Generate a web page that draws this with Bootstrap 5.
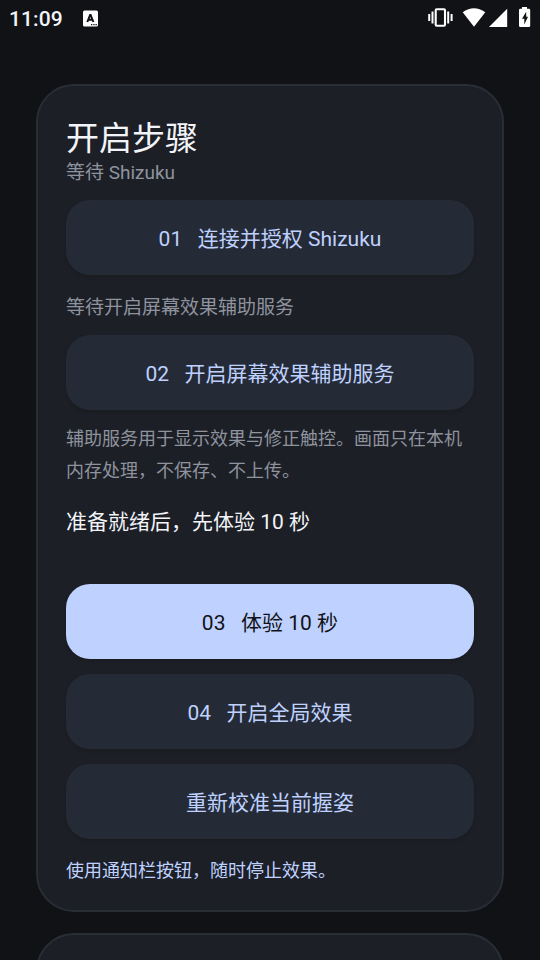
<!DOCTYPE html>
<html lang="zh-CN">
<head>
<meta charset="utf-8">
<meta name="viewport" content="width=device-width, initial-scale=1">
<title>开启步骤</title>
<link href="https://cdn.jsdelivr.net/npm/bootstrap@5.3.0/dist/css/bootstrap.min.css" rel="stylesheet">
<style>
body{background:#111216;color:#f2f4f8;font-family:Roboto,"Noto Sans CJK SC",sans-serif;height:960px}
.status{height:36px;padding:0 9px 0 9px}
.clock{font-size:21px;line-height:34px;padding-top:2px;font-weight:500;letter-spacing:.1px}
.notice{margin-left:20px}
.page{height:924px;padding:48px 36px 0;gap:21px}
.panel{background:#1c1f26;border:2px solid #292d35;border-radius:38px;padding:30px 28px 23px}
.panel-next{height:200px}
.title{font-size:33px;line-height:46px;font-weight:400}
.state{font-size:19px;line-height:24px;color:#8e939e;margin-bottom:15px}
.state-first{margin-top:-1px}
.state-second{margin-top:21px}
.hint{font-size:18px;line-height:32px;color:#8e939e}
.hint-body{margin:13px 0 0}
.ready{font-size:21px;line-height:28px;margin:21px 0 48px}
.step{height:75px;border:0;border-radius:24px;background:#252b36;color:#bfd1ff;font-size:21px;line-height:28px;padding:8px 12px 6px;white-space:pre;box-shadow:0 2px 3px rgba(24,24,22,.45)}
.step:hover{background:#2b3240;color:#bfd1ff}
.step-main,.step-main:hover{background:#bfd1ff;color:#111216}
.steps{gap:15px}
.accent{color:#bfd1ff}
</style>
</head>
<body class="overflow-hidden">
<header class="status d-flex align-items-center">
  <span class="clock">11:09</span>
  <svg class="notice" width="15" height="17" viewBox="0 0 15 17"><rect y=".5" width="15" height="16" rx="1.500" fill="#fff"/><path d="M4.300 12 7.100 4.900h.5l2.800 7.100M5.500 9.800h3.800" fill="none" stroke="#111216" stroke-width="2"/><path d="M8 14.600h1.300M10.300 14.600h1.300M12.500 14.600h1.300" stroke="#111216" stroke-width="1.200"/></svg>
  <svg class="ms-auto" width="112" height="24" viewBox="419 6 112 24" fill="#fff">
    <rect x="435.700" y="9.300" width="9.300" height="16.400" rx="1" fill="none" stroke="#fff" stroke-width="2.100"/>
    <path d="M432.500 11.500v12M429.200 14v7M448.200 11.500v12M451.600 14v7" stroke="#fff" stroke-width="2"/>
    <path d="M462.700 12.200Q474 4.200 485.300 12.200L474 26.800Z"/>
    <path d="M507.200 8.700V27H489Z"/>
    <path d="M522 7h5v1.800h2a1.200 1.200 0 0 1 1.200 1.200v15.800a1.200 1.200 0 0 1-1.200 1.200h-8.800a1.200 1.200 0 0 1-1.200-1.200V10a1.200 1.200 0 0 1 1.200-1.200H522Z"/>
    <path d="M526.200 11.800 522 18.800h2.300v5.700l3.700-7.700h-1.800Z" fill="#111216"/>
  </svg>
</header>
<main class="page d-flex flex-column overflow-hidden">
  <section class="panel d-flex flex-column flex-shrink-0">
    <h1 class="title mb-0">开启步骤</h1>
    <p class="state state-first">等待 Shizuku</p>
    <button class="btn step w-100" type="button">01   连接并授权 Shizuku</button>
    <p class="state state-second">等待开启屏幕效果辅助服务</p>
    <button class="btn step w-100" type="button">02   开启屏幕效果辅助服务</button>
    <p class="hint hint-body">辅助服务用于显示效果与修正触控。画面只在本机内存处理，不保存、不上传。</p>
    <p class="ready">准备就绪后，先体验 10 秒</p>
    <div class="steps d-grid">
      <button class="btn step step-main" type="button">03   体验 10 秒</button>
      <button class="btn step" type="button">04   开启全局效果</button>
      <button class="btn step" type="button">重新校准当前握姿</button>
    </div>
    <p class="hint accent mt-3 mb-0">使用通知栏按钮，随时停止效果。</p>
  </section>
  <section class="panel panel-next flex-shrink-0"></section>
</main>
<script src="https://cdn.jsdelivr.net/npm/bootstrap@5.3.0/dist/js/bootstrap.bundle.min.js"></script>
</body>
</html>
